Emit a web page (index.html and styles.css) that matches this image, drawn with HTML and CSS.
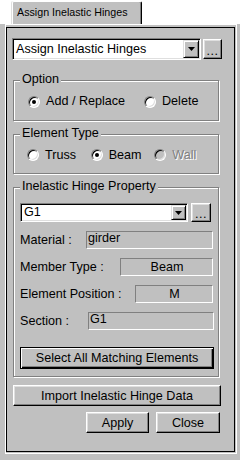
FILE: index.html
```html
<!DOCTYPE html>
<html lang="en">
<head>
    <meta charset="UTF-8">
    <meta name="viewport" content="width=device-width, initial-scale=1.0">
    <title>Assign Inelastic Hinges</title>
    <link rel="stylesheet" href="styles.css">
</head>
<body>
    <div class="tabbar">
        <div class="tab">Assign Inelastic Hinges</div>
    </div>
    <div class="page">
        <div class="inner">
            <div class="top-row">
                <div class="combo combo-main">
                    <span class="combo-text">Assign Inelastic Hinges</span>
                    <span class="combo-btn"><svg width="7" height="4" viewBox="0 0 7 4"><path d="M0 0h7L3.5 4z" fill="#000"/></svg></span>
                </div>
                <button class="btn btn-dots">...</button>
            </div>

            <div class="group group-option">
                <span class="group-title">Option</span>
                <label class="radio-item item-wide"><span class="radio checked"></span>Add / Replace</label>
                <label class="radio-item"><span class="radio"></span>Delete</label>
            </div>

            <div class="group group-type">
                <span class="group-title">Element Type</span>
                <label class="radio-item"><span class="radio"></span>Truss</label>
                <label class="radio-item"><span class="radio checked"></span>Beam</label>
                <label class="radio-item disabled"><span class="radio"></span>Wall</label>
            </div>

            <div class="group group-hinge">
                <span class="group-title">Inelastic Hinge Property</span>
                <div class="prop-row">
                    <div class="combo combo-prop">
                        <span class="combo-text">G1</span>
                        <span class="combo-btn"><svg width="7" height="4" viewBox="0 0 7 4"><path d="M0 0h7L3.5 4z" fill="#000"/></svg></span>
                    </div>
                    <button class="btn btn-dots btn-dots-small">...</button>
                </div>
                <div class="field-row">
                    <span class="field-label">Material :</span>
                    <span class="field field-material">girder</span>
                </div>
                <div class="field-row">
                    <span class="field-label">Member Type :</span>
                    <span class="field field-member center">Beam</span>
                </div>
                <div class="field-row">
                    <span class="field-label">Element Position :</span>
                    <span class="field field-position center">M</span>
                </div>
                <div class="field-row">
                    <span class="field-label">Section :</span>
                    <span class="field field-section">G1</span>
                </div>
                <button class="btn btn-default btn-select">Select All Matching Elements</button>
            </div>

            <button class="btn btn-import">Import Inelastic Hinge Data</button>
            <div class="action-row">
                <button class="btn btn-action">Apply</button>
                <button class="btn btn-action">Close</button>
            </div>
        </div>
    </div>
</body>
</html>
```

FILE: styles.css
```css
body {
    margin: 0;
    background: #c0c0c0;
    font-family: "Liberation Sans", Arial, sans-serif;
    font-size: 12.6px;
    color: #000;
}
.tabbar {
    height: 24px;
    background: #fff;
    padding: 1px 0 0 12px;
    box-sizing: border-box;
    display: flex;
}
.tab {
    width: 130px;
    height: 23px;
    box-sizing: border-box;
    background: #c0c0c0;
    border-top: 1px solid #fff;
    border-left: 1px solid #fff;
    border-right: 1px solid #000;
    border-radius: 2px 2px 0 0;
    box-shadow: inset -1px 0 0 #808080, -1px 0 0 #dfdfdf;
    padding: 4px 0 0 4px;
    font-size: 10.7px;
    line-height: 13px;
}
.page {
    margin-left: 5px;
    width: 232px;
    height: 430px;
    box-sizing: border-box;
    border: 1px solid #fff;
    padding: 2px 1px 1px 0;
}
.inner {
    height: 100%;
    box-sizing: border-box;
    border: 1px solid #000;
    padding-left: 5px;
}
.top-row {
    display: flex;
    align-items: center;
    margin-top: 10px;
}
.combo {
    display: flex;
    align-items: stretch;
    box-sizing: border-box;
    background: #fff;
    border: 1px solid;
    border-color: #808080 #fff #fff #808080;
    box-shadow: inset 1px 1px 0 #000, inset -1px -1px 0 #dfdfdf;
    padding: 1px;
}
.combo-main {
    width: 189px;
    height: 22px;
}
.combo-prop {
    width: 168px;
    height: 19px;
}
.combo-text {
    flex: 1;
    padding-left: 2px;
    line-height: 18px;
}
.combo-prop .combo-text {
    line-height: 15px;
}
.combo-btn {
    width: 16px;
    box-sizing: border-box;
    background: #c0c0c0;
    border: 1px solid;
    border-color: #dfdfdf #000 #000 #dfdfdf;
    box-shadow: inset 1px 1px 0 #fff, inset -1px -1px 0 #808080;
    display: flex;
    align-items: center;
    justify-content: center;
}
.combo-prop .combo-btn {
    width: 15px;
}
.btn {
    font-family: inherit;
    font-size: inherit;
    color: #000;
    background: #c0c0c0;
    box-sizing: border-box;
    border: 1px solid;
    border-color: #fff #000 #000 #fff;
    box-shadow: inset -1px -1px 0 #808080, inset 1px 1px 0 #dfdfdf;
    padding: 0;
    margin: 0;
    line-height: 16px;
}
.btn-dots {
    width: 19px;
    height: 20px;
    margin-left: 2px;
    padding-top: 3px;
    letter-spacing: 0.5px;
}
.btn-dots-small {
    width: 20px;
    height: 19px;
    margin-left: 3px;
    padding-top: 2px;
}
.btn-default {
    border: 1px solid #000;
    box-shadow: inset 1px 1px 0 #fff, inset -1px -1px 0 #000, inset -2px -2px 0 #808080;
}
.group {
    position: relative;
    margin: 0 0 0 1px;
    width: 206px;
    box-sizing: border-box;
    border: 1px solid #808080;
    box-shadow: inset 1px 1px 0 #fff, 1px 1px 0 #fff;
}
.group-title {
    position: absolute;
    top: -9px;
    left: 6px;
    padding: 0 2px;
    background: #c0c0c0;
    line-height: 15px;
}
.group-option {
    margin-top: 20px;
    height: 41px;
    display: flex;
    align-items: center;
    padding: 2px 0 0 14px;
}
.group-type {
    margin-top: 13px;
    height: 40px;
    display: flex;
    align-items: center;
    padding: 2px 0 0 13px;
}
.group-hinge {
    margin-top: 13px;
    height: 190px;
    padding: 15px 5px 0 6px;
}
.radio-item {
    display: flex;
    align-items: center;
    width: 66px;
    line-height: 15px;
}
.item-wide {
    width: 116px;
}
.radio {
    position: relative;
    width: 12px;
    height: 12px;
    box-sizing: border-box;
    border-radius: 50%;
    border: 1px solid;
    border-color: #808080 #fff #fff #808080;
    background: #fff;
    box-shadow: inset 1px 1px 0 #000, inset -1px -1px 0 #dfdfdf;
    margin-right: 6px;
}
.radio.checked::after {
    content: "";
    position: absolute;
    left: 3px;
    top: 3px;
    width: 4px;
    height: 4px;
    border-radius: 50%;
    background: #000;
}
.disabled {
    color: #808080;
    text-shadow: 1px 1px 0 #fff;
}
.disabled .radio {
    background: #c0c0c0;
}
.prop-row {
    display: flex;
    align-items: center;
}
.field-row {
    display: flex;
    align-items: center;
    height: 18px;
    margin-top: 9px;
}
.field {
    margin-left: auto;
    height: 18px;
    box-sizing: border-box;
    border: 1px solid;
    border-color: #808080 #fff #fff #808080;
    padding-left: 1px;
    line-height: 13px;
}
.field.center {
    text-align: center;
    line-height: 16px;
}
.field-material {
    width: 127px;
}
.field-member {
    width: 93px;
}
.field-position {
    width: 78px;
}
.field-section {
    width: 126px;
    margin-right: -1px;
}
.btn-select {
    display: block;
    width: 194px;
    height: 22px;
    margin-top: 17px;
}
.btn-import {
    display: block;
    width: 208px;
    height: 21px;
    margin: 8px 0 0 1px;
}
.action-row {
    display: flex;
    justify-content: flex-end;
    gap: 7px;
    width: 207px;
    margin: 6px 0 0 1px;
}
.btn-action {
    width: 63px;
    height: 21px;
}
.btn-action + .btn-action {
    width: 64px;
}
```
